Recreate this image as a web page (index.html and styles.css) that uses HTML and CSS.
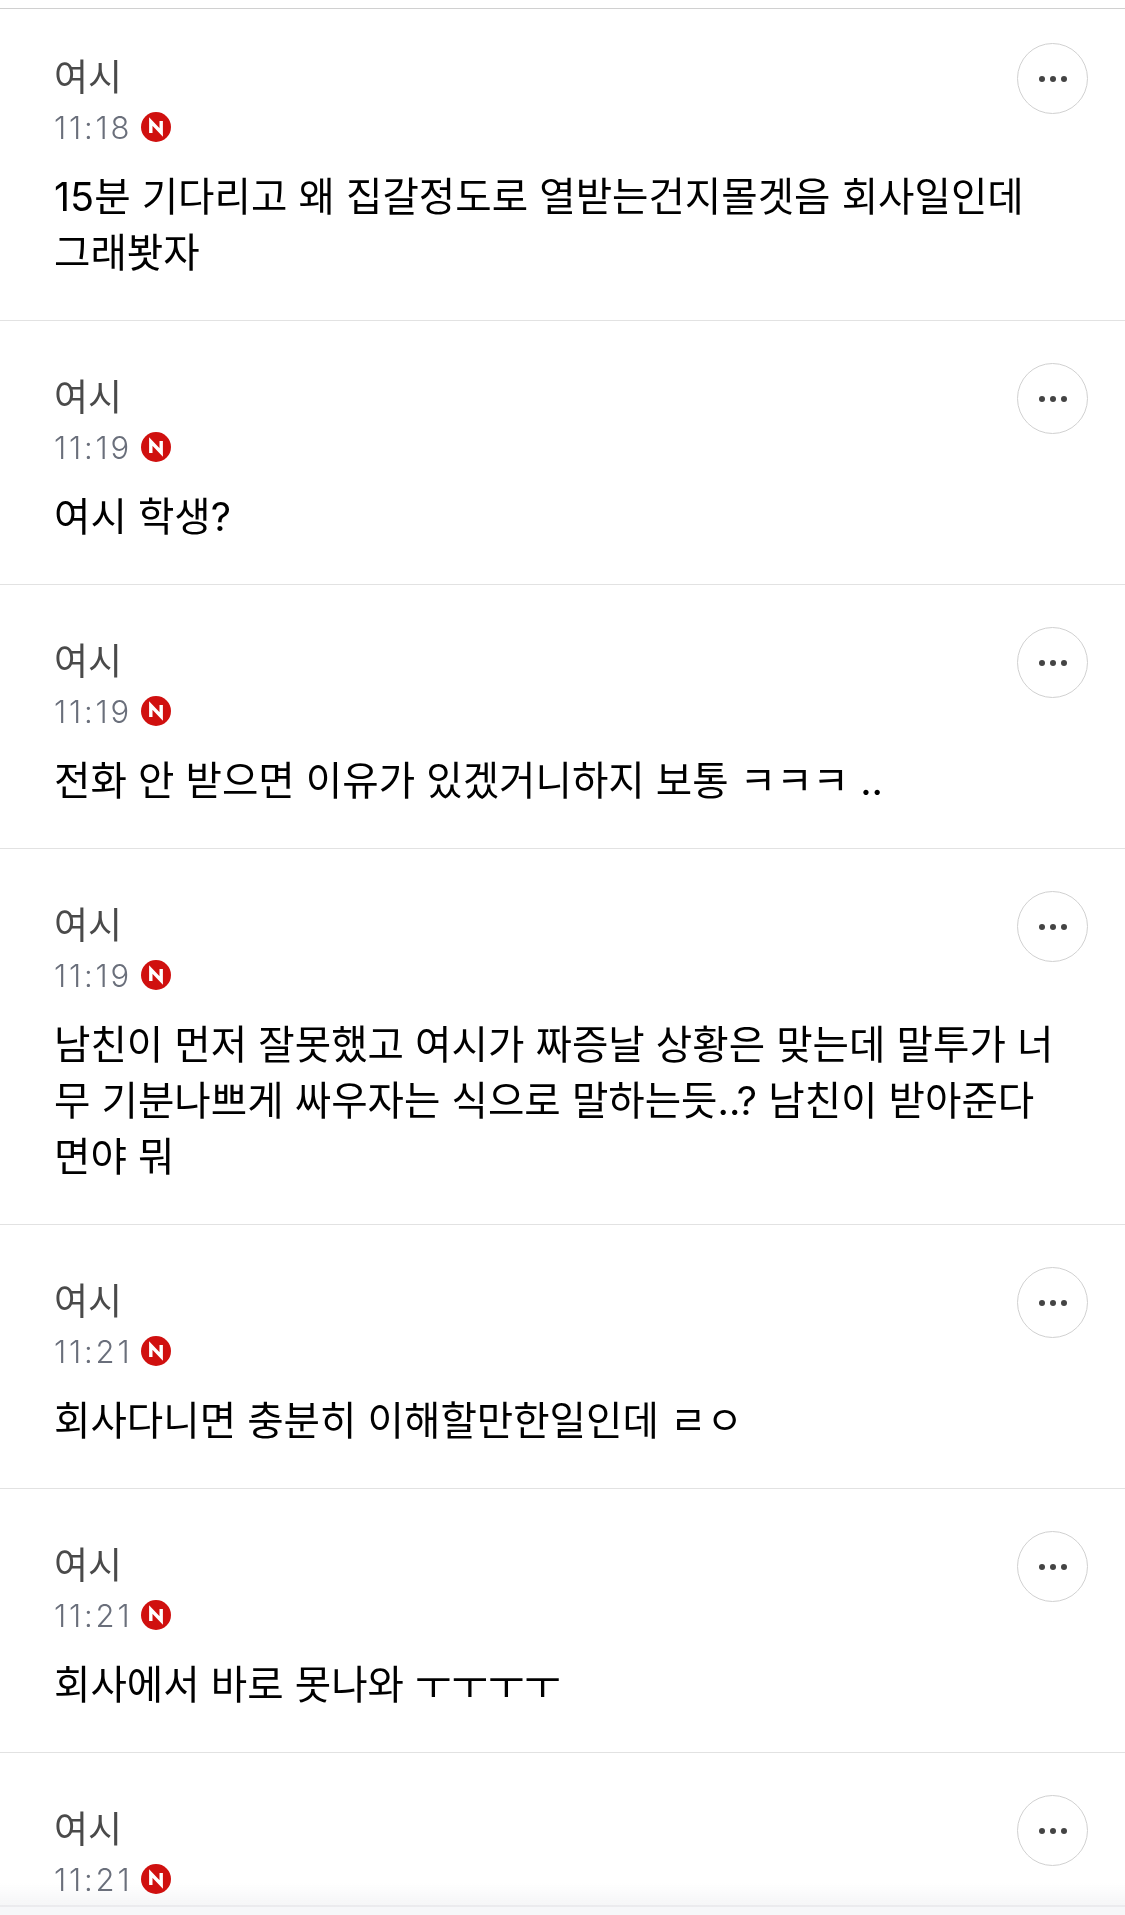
FILE: index.html
```html
<!DOCTYPE html>
<html lang="ko">
<head>
    <meta charset="UTF-8">
    <meta name="viewport" content="width=device-width, initial-scale=1.0">
    <title>댓글</title>
    <link rel="stylesheet" href="styles.css">
</head>
<body>
    <ul class="comments">
        <li class="comment comment-first">
            <div class="name">여시</div>
            <div class="meta"><span class="time">11:18</span><svg class="badge" viewBox="0 0 30 30"><circle cx="15" cy="15" r="15" fill="#d0100f"/><path d="M9.8 21V9.5L20.2 20.5V9" fill="none" stroke="#fff" stroke-width="3.4"/></svg></div>
            <p class="text">15분 기다리고 왜 집갈정도로 열받는건지몰겟음 회사일인데<br>그래봣자</p>
            <button class="more"><i></i><i></i><i></i></button>
        </li>
        <li class="comment">
            <div class="name">여시</div>
            <div class="meta"><span class="time">11:19</span><svg class="badge" viewBox="0 0 30 30"><circle cx="15" cy="15" r="15" fill="#d0100f"/><path d="M9.8 21V9.5L20.2 20.5V9" fill="none" stroke="#fff" stroke-width="3.4"/></svg></div>
            <p class="text">여시 학생?</p>
            <button class="more"><i></i><i></i><i></i></button>
        </li>
        <li class="comment">
            <div class="name">여시</div>
            <div class="meta"><span class="time">11:19</span><svg class="badge" viewBox="0 0 30 30"><circle cx="15" cy="15" r="15" fill="#d0100f"/><path d="M9.8 21V9.5L20.2 20.5V9" fill="none" stroke="#fff" stroke-width="3.4"/></svg></div>
            <p class="text">전화 안 받으면 이유가 있겠거니하지 보통 ㅋㅋㅋ ..</p>
            <button class="more"><i></i><i></i><i></i></button>
        </li>
        <li class="comment comment-long">
            <div class="name">여시</div>
            <div class="meta"><span class="time">11:19</span><svg class="badge" viewBox="0 0 30 30"><circle cx="15" cy="15" r="15" fill="#d0100f"/><path d="M9.8 21V9.5L20.2 20.5V9" fill="none" stroke="#fff" stroke-width="3.4"/></svg></div>
            <p class="text">남친이 먼저 잘못했고 여시가 짜증날 상황은 맞는데 말투가 너<br>무 기분나쁘게 싸우자는 식으로 말하는듯..? 남친이 받아준다<br>면야 뭐</p>
            <button class="more"><i></i><i></i><i></i></button>
        </li>
        <li class="comment">
            <div class="name">여시</div>
            <div class="meta"><span class="time">11:21</span><svg class="badge" viewBox="0 0 30 30"><circle cx="15" cy="15" r="15" fill="#d0100f"/><path d="M9.8 21V9.5L20.2 20.5V9" fill="none" stroke="#fff" stroke-width="3.4"/></svg></div>
            <p class="text">회사다니면 충분히 이해할만한일인데 ㄹㅇ</p>
            <button class="more"><i></i><i></i><i></i></button>
        </li>
        <li class="comment">
            <div class="name">여시</div>
            <div class="meta"><span class="time">11:21</span><svg class="badge" viewBox="0 0 30 30"><circle cx="15" cy="15" r="15" fill="#d0100f"/><path d="M9.8 21V9.5L20.2 20.5V9" fill="none" stroke="#fff" stroke-width="3.4"/></svg></div>
            <p class="text">회사에서 바로 못나와 ㅜㅜㅜㅜ</p>
            <button class="more"><i></i><i></i><i></i></button>
        </li>
        <li class="comment comment-last">
            <div class="name">여시</div>
            <div class="meta"><span class="time">11:21</span><svg class="badge" viewBox="0 0 30 30"><circle cx="15" cy="15" r="15" fill="#d0100f"/><path d="M9.8 21V9.5L20.2 20.5V9" fill="none" stroke="#fff" stroke-width="3.4"/></svg></div>
            <button class="more"><i></i><i></i><i></i></button>
        </li>
    </ul>
    <div class="bottom-bar"></div>
</body>
</html>
```

FILE: styles.css
```css
html {
    height: 100%;
    background-color: #fff;
}
body {
    margin: 0;
    height: 100%;
    overflow: hidden;
    font-family: "Inter", "Noto Sans CJK KR", sans-serif;
    padding-top: 8px;
    box-sizing: border-box;
}
.comments {
    list-style: none;
    margin: 0;
    padding: 0;
    border-top: 1px solid #d0d0d0;
}
.comment {
    position: relative;
    padding: 52px 54px 0;
    border-bottom: 1px solid #e2e2e2;
    height: 264px;
    box-sizing: border-box;
}
.comment-first {
    height: 312px;
    padding-top: 44px;
}
.comment-long {
    height: 376px;
}
.comment-last {
    height: 150px;
    border-bottom: 0;
}
.name {
    font-size: 37px;
    line-height: 50px;
    color: #4a4a4a;
}
.meta {
    display: flex;
    align-items: center;
    gap: 9px;
    height: 47px;
    padding-top: 1px;
    box-sizing: border-box;
}
.time {
    font-size: 31px;
    font-weight: 300;
    letter-spacing: 2.8px;
    color: #6a6f7b;
}
.badge {
    width: 30px;
    height: 30px;
}
.text {
    margin: 19px 0 0;
    font-size: 39.6px;
    line-height: 56px;
    color: #000;
}
.more {
    position: absolute;
    top: 42px;
    right: 37px;
    display: flex;
    align-items: center;
    justify-content: center;
    gap: 5px;
    width: 71px;
    height: 71px;
    padding: 0;
    background: #fff;
    border: 1.5px solid #d0d0d0;
    border-radius: 50%;
}
.comment-first .more {
    top: 34px;
}
.more i {
    width: 6px;
    height: 6px;
    border-radius: 50%;
    background: #444;
}
.bottom-bar {
    position: fixed;
    z-index: -1;
    left: 0;
    right: 0;
    bottom: 0;
    height: 10px;
    background: #f6f7f9;
    border-top: 2px solid #dfdfe3;
    box-sizing: border-box;
}
.bottom-bar::before {
    content: "";
    position: absolute;
    left: 0;
    right: 0;
    bottom: 8px;
    height: 24px;
    background: linear-gradient(rgba(240, 241, 243, 0), rgba(240, 241, 243, 0.7));
}
```
